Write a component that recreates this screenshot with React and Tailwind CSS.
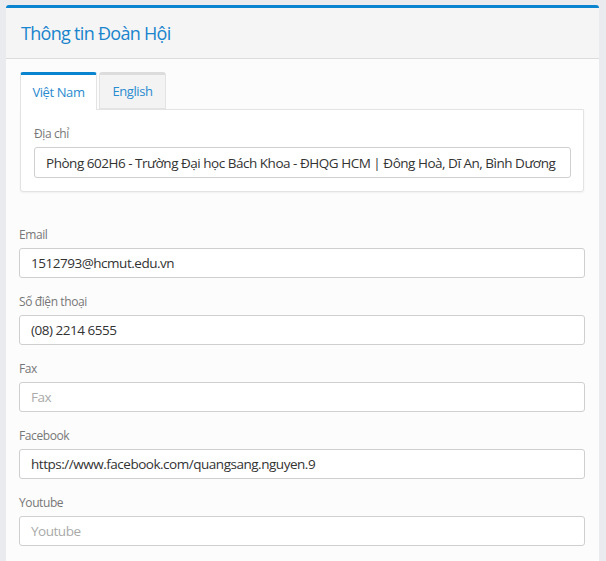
import { useState } from 'react'

const fields = [
  { label: 'Email', value: '1512793@hcmut.edu.vn' },
  { label: 'Số điện thoại', value: '(08) 2214 6555' },
  { label: 'Fax', value: '', placeholder: 'Fax' },
  { label: 'Facebook', value: 'https://www.facebook.com/quangsang.nguyen.9' },
  { label: 'Youtube', value: '', placeholder: 'Youtube' },
]

const inputCls = 'block w-full h-[30px] px-[11px] rounded-[3px] border border-[#cfcfcf] bg-white text-[13.5px] tracking-[-0.48px] text-[#333] placeholder:text-[#aaa] focus:outline-none'

export default function App() {
  const [tab, setTab] = useState('vi')
  const [address, setAddress] = useState('Phòng 602H6 - Trường Đại học Bách Khoa - ĐHQG HCM | Đông Hoà, Dĩ An, Bình Dương')

  return (
    <div className="min-h-[561px] bg-[#e9ebef] pt-[5px] pl-[6px] pr-[7px] tracking-[-0.4px]" style={{ fontFamily: '"Open Sans", sans-serif' }}>
      <div className="bg-[#fcfcfc] border-t-[3px] border-[#0a84cf] rounded-t-[3px] min-h-[556px]">
        <div className="h-[51px] bg-[#f5f5f5] border-b border-[#dcdcdc] flex items-center pl-[15px]">
          <h1 className="text-[18px] text-[#1a84cc] tracking-[-0.7px]">Thông tin Đoàn Hội</h1>
        </div>

        <div className="pt-[13px] pl-[13px] pr-[14px]">
          <div className="pl-px">
            <div className="flex gap-[2px] h-[37px] relative z-10">
              <button onClick={() => setTab('vi')}
                className={tab === 'vi'
                  ? 'w-[77px] h-[38px] border-t-[3px] border-x border-t-[#0a84cf] border-x-[#e3e3e3] rounded-t-[3px] bg-white text-[13px] text-[#2a8bd0]'
                  : 'w-[77px] h-[37px] border-t-[3px] border-x border-t-[#dcdcdc] border-x-[#e3e3e3] border-b border-b-[#e3e3e3] rounded-t-[3px] bg-[#f3f3f3] text-[13px] text-[#2a8bd0]'}>
                Việt Nam
              </button>
              <button onClick={() => setTab('en')}
                className={tab === 'en'
                  ? 'w-[67px] h-[38px] border-t-[3px] border-x border-t-[#0a84cf] border-x-[#e3e3e3] rounded-t-[3px] bg-white text-[13px] text-[#2a8bd0]'
                  : 'w-[67px] h-[37px] border-t-[3px] border-x border-t-[#dcdcdc] border-x-[#e3e3e3] border-b border-b-[#e3e3e3] rounded-t-[3px] bg-[#f3f3f3] text-[13px] text-[#2a8bd0]'}>
                English
              </button>
            </div>
            <div className="bg-white border border-[#e3e3e3] rounded-b-[3px] shadow-[0_1px_2px_rgba(0,0,0,0.05)] pt-[15px] pb-[13px] pl-[13px] pr-[12px] mr-px">
              <label className="block text-[12px] leading-[17px] text-[#777] mb-[5px]">Địa chỉ</label>
              <input className={inputCls + ' h-[31px]'} value={address} onChange={e => setAddress(e.target.value)} />
            </div>
          </div>

          <div className="mt-[34px]">
            {fields.map(f => (
              <div key={f.label} className="mb-[15px]">
                <label className="block text-[12px] leading-[17px] text-[#777] mb-[5px]">{f.label}</label>
                <input className={inputCls} defaultValue={f.value} placeholder={f.placeholder} />
              </div>
            ))}
          </div>
        </div>
      </div>
    </div>
  )
}
